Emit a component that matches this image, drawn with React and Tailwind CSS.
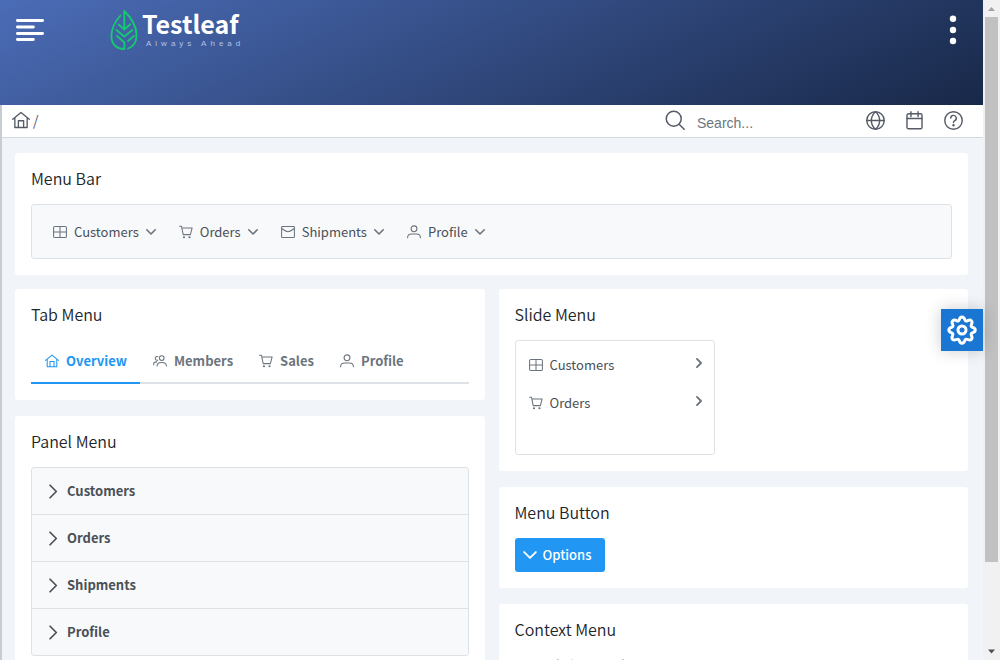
import React from "react";

function Icon({ children, className = "size-4", sw = 1.8 }) {
  return (
    <svg
      viewBox="0 0 24 24"
      className={className}
      fill="none"
      stroke="currentColor"
      strokeWidth={sw}
      strokeLinecap="round"
      strokeLinejoin="round"
      aria-hidden="true"
    >
      {children}
    </svg>
  );
}

const TableIcon = (p) => (
  <Icon {...p}>
    <rect x="1" y="2.500" width="22" height="19" rx="2" />
    <path d="M1 12h22M12 2.500v19" />
  </Icon>
);
const CartIcon = (p) => (
  <Icon {...p}>
    <path d="M1 2h3.200l3 14.500h12.300L22.500 5H5" />
    <circle cx="8.500" cy="21" r="1" fill="currentColor" />
    <circle cx="18" cy="21" r="1" fill="currentColor" />
  </Icon>
);
const EnvelopeIcon = (p) => (
  <Icon {...p}>
    <rect x="1" y="2.500" width="22" height="19" rx="1.500" />
    <path d="M2 6.500c3 2 6.500 5 10 5s7-3 10-5" />
  </Icon>
);
const UserIcon = (p) => (
  <Icon {...p}>
    <circle cx="12" cy="6.500" r="5" />
    <path d="M1 22c0-4 3-6.500 7-6.500h8c4 0 7 2.500 7 6.500" />
  </Icon>
);
const UsersIcon = (p) => (
  <Icon {...p}>
    <circle cx="15" cy="7" r="4" />
    <path d="M7 20.500c0-4 3.500-6 8-6s8 2 8 6M8.500 4.500a3.300 3.300 0 1 0-.5 6.200M1 18.500c0-3 2-5 5.500-5" />
  </Icon>
);
const HomeIcon = (p) => (
  <Icon {...p}>
    <path d="M1 11 12 2l11 9M3.800 9v13h16.400V9M8.500 22v-9h7v9" />
  </Icon>
);
const AngleDown = (p) => (
  <Icon sw={3.2} {...p}>
    <path d="m3.500 7.500 8.500 8.500 8.500-8.500" />
  </Icon>
);
const AngleRight = (p) => (
  <Icon sw={3.2} {...p}>
    <path d="m8.500 5 7 7-7 7" />
  </Icon>
);
const ChevronRight = (p) => (
  <Icon sw={2.800} {...p}>
    <path d="m6.500 2 10 10-10 10" />
  </Icon>
);
const ChevronDown = (p) => (
  <Icon sw={3.2} {...p}>
    <path d="m2 7 10 10L22 7" />
  </Icon>
);

function Leaf() {
  return (
    <svg viewBox="0 0 27 40" className="h-10 w-7 shrink-0" fill="none" stroke="#14cc70" strokeWidth="1.8" strokeLinecap="round" strokeLinejoin="round" aria-hidden="true">
      <path d="M10 5.500C5 11 .9 18 .9 26c0 8 5 13 13 13v-6.500L6.500 26" />
      <path d="M13.800 18.500V1C20 7 26 15 26 25c0 7.500-3.500 12-8.500 13.500" />
      <path d="m8.200 14.500 5.600 5 6-5.200M6 20l7.800 6.500 8.200-6.500M17.500 31l6-5" />
    </svg>
  );
}

function Card({ title, children }) {
  return (
    <section className="rounded-[3px] bg-white p-4">
      <h5 className="mb-4 text-base leading-[19px] font-[350] text-[#212529]">{title}</h5>
      {children}
    </section>
  );
}

const bar = [
  ["Customers", TableIcon],
  ["Orders", CartIcon],
  ["Shipments", EnvelopeIcon],
  ["Profile", UserIcon],
];
const tabs = [
  ["Overview", HomeIcon],
  ["Members", UsersIcon],
  ["Sales", CartIcon],
  ["Profile", UserIcon],
];

function Header() {
  return (
    <header className="flex h-[105px] items-start justify-between bg-linear-[155deg,#4b6cb7,#182848] px-4 text-white">
      <div className="flex items-start">
        <button type="button" aria-label="Toggle menu" className="mt-4 text-white">
          <svg viewBox="0 0 28 28" className="size-7" stroke="currentColor" strokeWidth="2.800" strokeLinecap="round" aria-hidden="true">
            <path d="M1.400 4.500h25.200M1.400 11h16M1.400 17.500h25.200M1.400 23.500h16" />
          </svg>
        </button>
        <a href="#home" className="mt-2.5 ml-[66px] flex gap-1">
          <Leaf />
          <span className="flex flex-col">
            <span className="text-[25px] leading-[26px] font-bold">Testleaf</span>
            <span className="pt-0.5 pl-1 font-['Liberation_Sans',sans-serif] text-[8px] leading-3 tracking-[4px] text-[#b4c3e6]">Always Ahead</span>
          </span>
        </a>
      </div>
      <button type="button" aria-label="More options" className="mt-4 w-7">
        <svg viewBox="0 0 28 28" className="size-7 overflow-visible" fill="currentColor" aria-hidden="true">
          <circle cx="14" cy="2.800" r="3.200" />
          <circle cx="14" cy="14" r="3.200" />
          <circle cx="14" cy="25" r="3.200" />
        </svg>
      </button>
    </header>
  );
}

function Breadcrumb() {
  return (
    <div className="flex h-[33px] items-center border-b border-[#d5d8dc] bg-white pr-5 pb-0.5 pl-2.5 text-[#555b66]">
      <a href="#home" aria-label="Home"><HomeIcon className="size-[18px]" /></a>
      <span className="ml-[3px] text-sm">/</span>
      <label className="ml-auto flex items-center gap-3">
        <Icon className="size-5">
          <circle cx="10.500" cy="10.500" r="9" />
          <path d="m17 17 6 6" />
        </Icon>
        <input type="text" placeholder="Search..." aria-label="Search" className="mt-1.5 w-[169px] font-['Liberation_Sans',sans-serif] text-sm placeholder-[#6c757d] outline-none" />
      </label>
      <div className="flex items-center gap-5">
        <button type="button" aria-label="Language">
          <Icon className="size-[19px]">
            <circle cx="12" cy="12" r="11" />
            <path d="M1 12h22M12 1c-7 6-7 16 0 22M12 1c7 6 7 16 0 22" />
          </Icon>
        </button>
        <button type="button" aria-label="Calendar">
          <Icon className="size-[19px]">
            <rect x="2.500" y="3.500" width="19" height="19" rx="2" />
            <path d="M2.500 9.500h19M7.500 1v6M16.500 1v6" />
          </Icon>
        </button>
        <button type="button" aria-label="Help">
          <Icon className="size-[19px]">
            <circle cx="12" cy="12" r="11" />
            <path d="M8.500 9a3.500 3.500 0 1 1 5 3.200c-1 .5-1.500 1-1.500 2.300" />
            <circle cx="12" cy="18" r=".7" fill="currentColor" />
          </Icon>
        </button>
      </div>
    </div>
  );
}

export default function App() {
  return (
    <div className="flex h-screen overflow-hidden bg-[#f1f4f9] font-['Noto_Sans_CJK_SC',sans-serif] text-[13px] text-[#495057]">
      <div className="flex min-w-0 flex-1 flex-col">
        <Header />
        <div className="min-h-0 flex-1 overflow-hidden border-l-2 border-[#c8ccd3]">
          <Breadcrumb />
          <main className="flex flex-col gap-3.5 py-[15px] pr-[15px] pl-[13px]">
            <Card title="Menu Bar">
              <nav className="flex h-[55px] items-center rounded-[3px] border border-[#dee2e6] bg-[#f8f9fa] px-2.5">
                {bar.map(([label, I]) => (
                  <button key={label} type="button" className="flex items-center px-[11px]">
                    <I className="size-3.5 text-[#6c757d]" />
                    <span className="ml-[7px]">{label}</span>
                    <AngleDown className="ml-1.5 size-3 text-[#6c757d]" />
                  </button>
                ))}
              </nav>
            </Card>

            <div className="grid grid-cols-2 items-start gap-3.5">
              <div className="flex flex-col gap-4">
                <Card title="Tab Menu">
                  <nav className="flex h-11 border-b-2 border-[#dee2e6] font-bold text-[#6c757d]">
                    {tabs.map(([label, I], i) => (
                      <a
                        key={label}
                        href="#tab"
                        className={
                          i === 0
                            ? "-mb-0.5 flex items-center gap-[7px] border-b-2 border-[#2196f3] pr-[13px] pl-3.5 text-[#2196f3]"
                            : "-mb-0.5 flex items-center gap-[7px] border-b-2 border-transparent px-[13px]"
                        }
                      >
                        <I className="size-3.5" />
                        {label}
                      </a>
                    ))}
                  </nav>
                </Card>
                <Card title="Panel Menu">
                  <ul className="divide-y divide-[#dee2e6] rounded-[3px] border border-[#dee2e6] bg-[#f8f9fa] font-bold">
                    {bar.map(([label]) => (
                      <li key={label}>
                        <button type="button" className="flex h-[46px] w-full items-center gap-1.5 px-3.5">
                          <ChevronRight className="size-[15px]" />
                          {label}
                        </button>
                      </li>
                    ))}
                  </ul>
                </Card>
              </div>

              <div className="flex flex-col gap-4">
                <Card title="Slide Menu">
                  <ul className="h-[115px] w-[200px] rounded-[3px] border border-[#dee2e6] py-[5px]">
                    {bar.slice(0, 2).map(([label, I]) => (
                      <li key={label}>
                        <button type="button" className="flex h-[38px] w-full items-center pr-2 pl-[13px]">
                          <I className="size-3.5 text-[#6c757d]" />
                          <span className="ml-[7px]">{label}</span>
                          <AngleRight className="mb-1 ml-auto size-3.5 text-[#6c757d]" />
                        </button>
                      </li>
                    ))}
                  </ul>
                </Card>
                <Card title="Menu Button">
                  <button type="button" className="flex h-[34px] items-center gap-1.5 rounded-[3px] bg-[#2196f3] pr-3.5 pl-2 font-medium text-white">
                    <ChevronDown className="size-3.5" />
                    Options
                  </button>
                </Card>
                <Card title="Context Menu">
                  <p className="leading-5">Right click to display.</p>
                </Card>
              </div>
            </div>
          </main>
        </div>
      </div>

      <button type="button" aria-label="Theme settings" className="fixed top-[309px] right-[17px] flex size-[42px] items-center justify-center bg-[#1976d2] text-white shadow-[0_0_16px_rgba(0,0,0,0.2)]">
        <Icon className="size-[30px]" sw={2.4}>
          <circle cx="12" cy="12" r="3.200" />
          <path d="M12 1.500c1.600 0 1.900 1 2.300 2.300.4 1.100 1.300 1.200 2.300.7 1.200-.6 2-.8 2.900.1s.7 1.700.1 2.900c-.5 1-.4 1.900.7 2.300 1.300.4 2.300.7 2.300 2.200s-1 1.900-2.300 2.300c-1.100.4-1.200 1.300-.7 2.300.6 1.200.8 2-.1 2.900s-1.700.7-2.900.1c-1-.5-1.900-.4-2.300.7-.4 1.300-.7 2.300-2.300 2.300s-1.900-1-2.300-2.300c-.4-1.100-1.300-1.200-2.300-.7-1.200.6-2 .8-2.900-.1s-.7-1.700-.1-2.900c.5-1 .4-1.900-.7-2.300C2.500 13.900 1.500 13.500 1.500 12s1-1.800 2.300-2.200c1.100-.4 1.200-1.300.7-2.300-.6-1.200-.8-2 .1-2.900s1.700-.7 2.900-.1c1 .5 1.900.4 2.300-.7C10.100 2.500 10.400 1.500 12 1.500Z" />
        </Icon>
      </button>

      <div className="flex w-[17px] shrink-0 flex-col items-center justify-between bg-[#f1f1f1]" aria-hidden="true">
        <svg viewBox="0 0 17 17" className="size-[17px]" fill="#a3a3a3"><path d="M5 11h7L8.500 7z" /></svg>
        <div className="w-[13px] flex-1"><div className="h-[87%] bg-[#c1c1c1]" /></div>
        <svg viewBox="0 0 17 17" className="size-[17px]" fill="#505050"><path d="M5 6.500h7L8.500 10.500z" /></svg>
      </div>
    </div>
  );
}
